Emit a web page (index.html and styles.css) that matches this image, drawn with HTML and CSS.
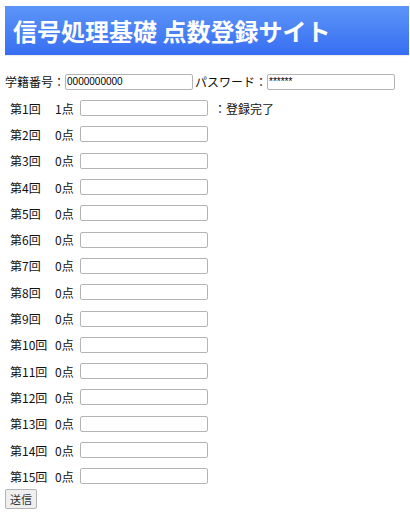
FILE: index.html
```html
<!DOCTYPE html>
<html lang="ja">
<head>
<meta charset="utf-8">
<title>信号処理基礎 点数登録サイト</title>
<link rel="stylesheet" href="styles.css">
</head>
<body>
<header class="site-header"><h1 class="site-title">信号処理基礎 点数登録サイト</h1></header>
<form class="score-form">
  <div class="login-row">
    <label class="login-label">学籍番号：</label><input class="field" type="text" value="0000000000">
    <label class="login-label">パスワード：</label><input class="field pw" type="text" value="******">
  </div>
  <div class="score-table">
    <div class="score-row"><span class="round">第1回</span><span class="pts">1点</span><input class="field" type="text"><span class="status">：登録完了</span></div>
    <div class="score-row"><span class="round">第2回</span><span class="pts">0点</span><input class="field" type="text"></div>
    <div class="score-row"><span class="round">第3回</span><span class="pts">0点</span><input class="field" type="text"></div>
    <div class="score-row"><span class="round">第4回</span><span class="pts">0点</span><input class="field" type="text"></div>
    <div class="score-row"><span class="round">第5回</span><span class="pts">0点</span><input class="field" type="text"></div>
    <div class="score-row"><span class="round">第6回</span><span class="pts">0点</span><input class="field" type="text"></div>
    <div class="score-row"><span class="round">第7回</span><span class="pts">0点</span><input class="field" type="text"></div>
    <div class="score-row"><span class="round">第8回</span><span class="pts">0点</span><input class="field" type="text"></div>
    <div class="score-row"><span class="round">第9回</span><span class="pts">0点</span><input class="field" type="text"></div>
    <div class="score-row"><span class="round">第10回</span><span class="pts">0点</span><input class="field" type="text"></div>
    <div class="score-row"><span class="round">第11回</span><span class="pts">0点</span><input class="field" type="text"></div>
    <div class="score-row"><span class="round">第12回</span><span class="pts">0点</span><input class="field" type="text"></div>
    <div class="score-row"><span class="round">第13回</span><span class="pts">0点</span><input class="field" type="text"></div>
    <div class="score-row"><span class="round">第14回</span><span class="pts">0点</span><input class="field" type="text"></div>
    <div class="score-row"><span class="round">第15回</span><span class="pts">0点</span><input class="field" type="text"></div>
  </div>
  <button class="send" type="button">送信</button>
</form>
</body>
</html>
```
FILE: styles.css
```css
html, body {
  background: #ffffff;
}
body {
  margin: 6px 1px 0 5px;
  font-family: "Noto Sans CJK JP", "Noto Sans", sans-serif;
  font-size: 12px;
  color: #111111;
}
.site-header {
  height: 49px;
  background: linear-gradient(to bottom, #5c95f8, #376ef2);
  box-shadow: 0 1px 1px rgba(0,0,0,0.08);
  display: flex;
  align-items: center;
  padding-left: 8px;
}
.site-title {
  margin: 0;
  color: #ffffff;
  font-size: 24px;
  font-weight: 700;
  line-height: 1;
}
.score-form {
  margin-top: 18px;
}
.login-row {
  display: flex;
  align-items: center;
  height: 17px;
}
.login-label {
  line-height: 17px;
}
.field {
  box-sizing: border-box;
  width: 128px;
  height: 16px;
  margin: 0 2px 0 0;
  padding: 0 2px 0 1px;
  border: 1px solid #b4b4b4;
  border-radius: 2px;
  font-family: "Liberation Sans", sans-serif;
  font-size: 10px;
  color: #000;
  background: #fff;
}
.score-table {
  display: flex;
  flex-direction: column;
  margin-top: 5px;
}
.score-row {
  display: flex;
  align-items: center;
  height: 26.3px;
}
.round {
  width: 50px;
  padding-left: 5px;
  box-sizing: border-box;
}
.pts {
  width: 24px;
}
.score-row .field {
  margin: 0 0 0 1px;
}
.status {
  margin-left: 6px;
}
.send {
  display: block;
  margin-top: 0;
  height: 20px;
  padding: 0 4px;
  font-family: "Noto Sans CJK JP", sans-serif;
  font-size: 11px;
  color: #333;
  background: #efefef;
  border: 1px solid #b4b4b4;
  border-radius: 2px;
}
```
